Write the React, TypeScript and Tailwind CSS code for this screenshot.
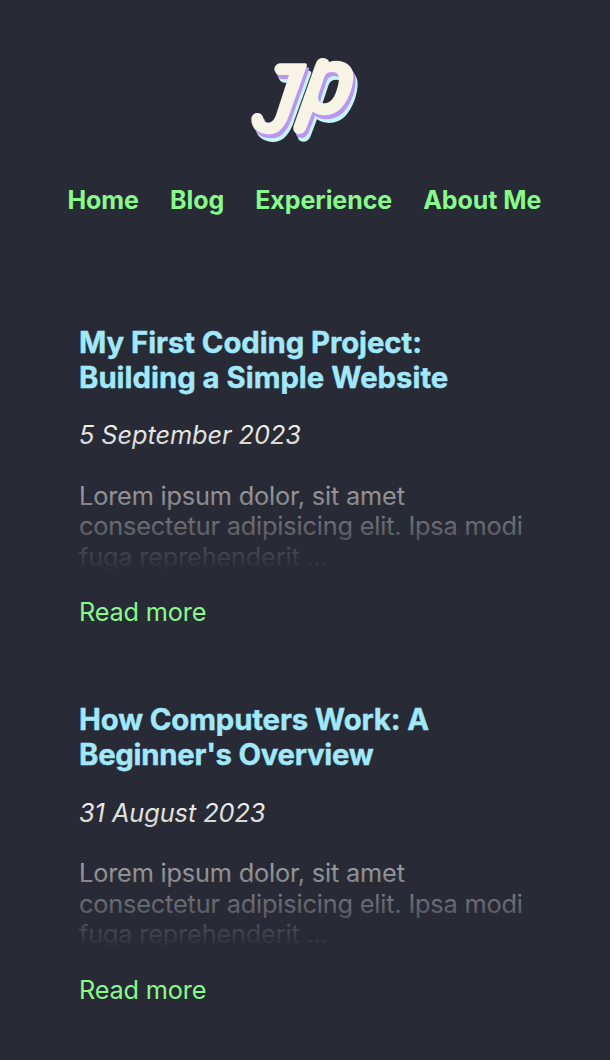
const J =
  "M120 55H196Q203 56 200 64L151 200C138 242 118 268 88 268C56 268 34 250 34 224A18 18 0 0 1 70 220C70 229 76 233 84 233C97 233 104 222 109 207L147 90H121A17.5 17.5 0 0 1 120 55Z";
const P =
  "M228 54C232 42 241 38 250 39C259 40 266 45 268 51C298 40 340 54 340 92C340 120 330 158 306 187C284 213 244 218 218 200L199 250C194 263 186 268 177 267C164 266 157 256 161 243ZM253 96L235 150C231 167 241 176 256 175C280 172 290 142 296 112C300 90 292 81 276 81C264 81 257 86 253 96Z";

function Letter({ d }: { d: string }) {
  return (
    <g fillRule="evenodd">
      <path d={d} fill="#c8f5fc" transform="translate(13 23)" />
      <path d={d} fill="#b797f3" transform="translate(7 12)" />
      <path d={d} fill="#f8f4e5" />
    </g>
  );
}

function Logo() {
  return (
    <svg viewBox="0 0 390 330" className="h-[110px] w-[130px]" aria-label="JP">
      <Letter d={J} />
      <path d="M226 60L160 245" stroke="#55565f" strokeWidth="4" />
      <Letter d={P} />
    </svg>
  );
}

const posts = [
  {
    title: [
      { text: "My First Coding Project:", tracking: "tracking-[-0.06px]" },
      { text: "Building a Simple Website", tracking: "tracking-[0px]" },
    ],
    date: "5 September 2023",
  },
  {
    title: [
      { text: "How Computers Work: A", tracking: "tracking-[-0.12px]" },
      { text: "Beginner's Overview", tracking: "tracking-[-0.25px]" },
    ],
    date: "31 August 2023",
  },
];

export default function App() {
  return (
    <div className="flex min-h-[1060px] flex-col bg-[#282a36] pt-[45px] font-['Inter',sans-serif] text-[25.3px] leading-[30.4px] tracking-[-0.17px] text-[#f8f8f2]">
      <header className="flex flex-col items-center">
        <a href="#">
          <Logo />
        </a>
        <nav className="mt-[30px] mr-[1.2px] flex gap-[31px] text-[25px] font-bold tracking-[-0.05px] whitespace-nowrap text-[#87fa8b]">
          <a href="#">Home</a>
          <a href="#">Blog</a>
          <a href="#">Experience</a>
          <a href="#">About Me</a>
        </nav>
      </header>
      <main className="mt-[110px] flex flex-col gap-[75.6px] px-[79px]">
        {posts.map((post) => (
          <article key={post.date} className="whitespace-nowrap">
            <h2 className="-mt-[0.6px] mb-[25.6px] text-[29.3px] leading-[35px] font-bold text-[#a1e8fb] [-webkit-text-stroke:0.4px_#a1e8fb]">
              {post.title.map((line) => (
                <span key={line.text} className={`block ${line.tracking}`}>
                  {line.text}
                </span>
              ))}
            </h2>
            <div className="relative w-[450px]">
              <p className="tracking-[-0.05px] italic">{post.date}</p>
              <p className="mt-[30px]">
                Lorem ipsum dolor, sit amet
                <br />
                consectetur adipisicing elit. Ipsa modi
                <br />
                fuga reprehenderit ...
              </p>
              <div className="pointer-events-none absolute inset-0 bg-linear-to-b from-transparent to-[#282a36]" />
            </div>
            <a href="#" className="mt-[25px] block text-[#87fa8b]">
              Read more
            </a>
          </article>
        ))}
      </main>
    </div>
  );
}
